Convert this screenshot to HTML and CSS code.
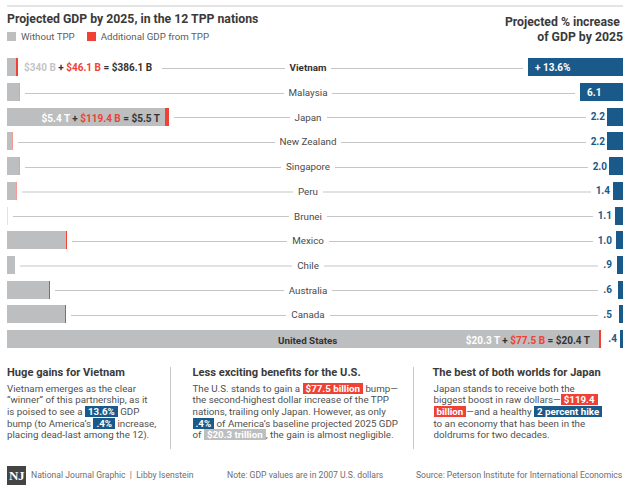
FILE: index.html
```html
<!DOCTYPE html>
<html lang="en">
<head>
<meta charset="utf-8">
<title>Projected GDP by 2025</title>
<link rel="stylesheet" href="styles.css">
</head>
<body>
<main class="page">
  <header class="head">
    <div>
      <h1 class="title">Projected GDP by 2025, in the 12 TPP nations</h1>
      <div class="legend">
        <span class="key"><i class="swatch gray"></i>Without TPP</span>
        <span class="key"><i class="swatch red"></i>Additional GDP from TPP</span>
      </div>
    </div>
    <h2 class="title right-title">Projected % increase&nbsp;<br>of GDP by 2025</h2>
  </header>

  <section class="chart">
    <div class="row strong">
      <div class="left"><i class="g" style="width:9px"></i><i class="r" style="width:2px"></i><span class="sum"><span class="light">$340 B</span> + <span class="redt">$46.1 B</span> = $386.1 B</span><i class="line"></i></div>
      <div class="mid"><i class="line"></i><span class="name">Vietnam</span><i class="line"></i></div>
      <div class="right"><i class="line"></i><b class="bar wide" style="width:95px">+ 13.6%</b></div>
    </div>
    <div class="row">
      <div class="left"><i class="g" style="width:12px"></i><i class="r thin" style="width:1px"></i><i class="line"></i></div>
      <div class="mid"><i class="line"></i><span class="name">Malaysia</span><i class="line"></i></div>
      <div class="right"><i class="line"></i><b class="bar wide" style="width:43px">6.1</b></div>
    </div>
    <div class="row">
      <div class="left"><i class="g in" style="width:158px"><span class="sum"><span class="white">$5.4 T</span> + <span class="redt">$119.4 B</span> = $5.5 T</span></i><i class="r" style="width:4px"></i><i class="line"></i></div>
      <div class="mid"><i class="line"></i><span class="name">Japan</span><i class="line"></i></div>
      <div class="right"><i class="line"></i><b class="val">2.2</b><i class="bar" style="width:16px"></i></div>
    </div>
    <div class="row">
      <div class="left"><i class="g" style="width:5px"></i><i class="r thin" style="width:1px"></i><i class="line"></i></div>
      <div class="mid"><i class="line"></i><span class="name">New Zealand</span><i class="line"></i></div>
      <div class="right"><i class="line"></i><b class="val">2.2</b><i class="bar" style="width:16px"></i></div>
    </div>
    <div class="row">
      <div class="left"><i class="g" style="width:12px"></i><i class="r thin" style="width:1px"></i><i class="line"></i></div>
      <div class="mid"><i class="line"></i><span class="name">Singapore</span><i class="line"></i></div>
      <div class="right"><i class="line"></i><b class="val">2.0</b><i class="bar" style="width:14px"></i></div>
    </div>
    <div class="row soft">
      <div class="left"><i class="g" style="width:9px"></i><i class="r thin" style="width:1px"></i><i class="line"></i></div>
      <div class="mid"><i class="line"></i><span class="name">Peru</span><i class="line"></i></div>
      <div class="right"><i class="line"></i><b class="val" style="margin-right:3px">1.4</b><i class="bar" style="width:10px"></i></div>
    </div>
    <div class="row">
      <div class="left"><i class="g pale" style="width:1px"></i><i class="line"></i></div>
      <div class="mid"><i class="line"></i><span class="name">Brunei</span><i class="line"></i></div>
      <div class="right"><i class="line"></i><b class="val" style="margin-right:3px">1.1</b><i class="bar" style="width:8px"></i></div>
    </div>
    <div class="row">
      <div class="left"><i class="g" style="width:59px"></i><i class="r" style="width:1px"></i><i class="line"></i></div>
      <div class="mid"><i class="line"></i><span class="name">Mexico</span><i class="line"></i></div>
      <div class="right"><i class="line"></i><b class="val" style="margin-right:4px">1.0</b><i class="bar" style="width:7px"></i></div>
    </div>
    <div class="row soft">
      <div class="left"><i class="g" style="width:8px"></i><i class="line"></i></div>
      <div class="mid"><i class="line"></i><span class="name">Chile</span><i class="line"></i></div>
      <div class="right"><i class="line"></i><b class="val" style="margin-right:5px">.9</b><i class="bar" style="width:6px"></i></div>
    </div>
    <div class="row">
      <div class="left"><i class="g" style="width:42px"></i><i class="r" style="width:1px"></i><i class="line"></i></div>
      <div class="mid"><i class="line"></i><span class="name">Australia</span><i class="line"></i></div>
      <div class="right"><i class="line"></i><b class="val" style="margin-right:6px">.6</b><i class="bar" style="width:5px"></i></div>
    </div>
    <div class="row">
      <div class="left"><i class="g" style="width:58px"></i><i class="r" style="width:1px"></i><i class="line"></i></div>
      <div class="mid"><i class="line"></i><span class="name">Canada</span><i class="line"></i></div>
      <div class="right"><i class="line"></i><b class="val" style="margin-right:7px">.5</b><i class="bar" style="width:4px"></i></div>
    </div>
    <div class="row usa">
      <div class="usa-bar">
        <span class="name">United States</span>
        <span class="sum"><span class="white">$20.3 T</span> + <span class="redt">$77.5 B</span> = $20.4 T</span>
      </div>
      <i class="r" style="width:2px"></i>
      <b class="val">.4</b><i class="bar" style="width:3px"></i>
    </div>
  </section>

  <section class="notes">
    <article class="note first">
      <h3>Huge gains for Vietnam</h3>
      <p>Vietnam emerges as the clear<br>“winner” of this partnership, as it<br>is poised to see a <mark class="hb">13.6%</mark> GDP<br>bump (to America’s <mark class="hb">.4%</mark> increase,<br>placing dead-last among the 12).</p>
    </article>
    <article class="note second">
      <h3>Less exciting benefits for the U.S.</h3>
      <p>The U.S. stands to gain a <mark class="hr">$77.5 billion</mark> bump—<br>the second-highest dollar increase of the TPP<br>nations, trailing only Japan. However, as only<br><mark class="hb">.4%</mark> of America’s baseline projected 2025 GDP<br>of <mark class="hg">$20.3 trillion</mark>, the gain is almost negligible.</p>
    </article>
    <article class="note third">
      <h3>The best of both worlds for Japan</h3>
      <p>Japan stands to receive both the<br>biggest boost in raw dollars—<mark class="hr">$119.4</mark><br><mark class="hr">billion</mark>—and a healthy <mark class="hb">2 percent hike</mark><br>to an economy that has been in the<br>doldrums for two decades.</p>
    </article>
  </section>

  <footer class="foot">
    <div class="credit"><span class="logo">NJ</span>National Journal Graphic &nbsp;|&nbsp; Libby Isenstein</div>
    <div class="fnote">Note: GDP values are in 2007 U.S. dollars</div>
    <div class="source">Source: Peterson Institute for International Economics</div>
  </footer>
</main>
</body>
</html>
```

FILE: styles.css
```css
* { box-sizing: border-box; }
html, body { margin: 0; padding: 0; background: #fff; }
body { font-family: Roboto, "Liberation Sans", sans-serif; color: #555; width: 630px; height: 488px; overflow: hidden; }
i { font-style: normal; display: block; }
.page { padding: 5px 7px 0; }

.head { display: flex; justify-content: space-between; border-top: 2px solid #e4e4e4; height: 53.4px; padding-top: 5px; }
.title { margin: 0; font-size: 12.25px; font-weight: 700; line-height: 15px; color: #3a3a3a; }
.right-title { text-align: right; padding-top: 3px; }
.legend { display: flex; gap: 12px; margin-top: 3px; font-size: 9.7px; line-height: 13px; color: #5c5c5c; }
.key { display: flex; align-items: center; gap: 5px; }
.swatch { width: 9px; height: 9px; }
.swatch.gray { background: #bdbebf; }
.swatch.red { background: #ef4136; }

.chart { display: flex; flex-direction: column; gap: 6.7px; }
.row { display: grid; grid-template-columns: 243px 116px 1fr; height: 18px; align-items: center; font-size: 9.8px; line-height: 18px; }
.left, .mid, .right { display: flex; align-items: center; height: 18px; min-width: 0; }
.g { height: 18px; background: #bdbebf; flex: none; }
.g.pale { background: #e2e2e2; }
.r { height: 18px; background: #ef4136; flex: none; }
.r.thin { background: #f49a94; }
.line { flex: 1; min-width: 0; height: 1px; margin-top: 2px; background: #c6c6c6; }
.soft .line { height: 2px; background: #e2e2e2; }
.left .line { margin-left: 5px; }
.right .line { margin-right: 5px; }
.name { flex: none; margin: 0 5px; padding-top: 2px; color: #4a4a4a; }
.strong .name, .usa .name { font-weight: 700; color: #333; }
.sum { flex: none; margin: 0 5px 0 6px; padding-top: 2px; font-weight: 700; font-size: 10px; color: #333; white-space: nowrap; }
.light { color: #c4c5c6; }
.white { color: #fff; }
.redt { color: #ef4136; }
.g.in { display: flex; justify-content: flex-end; }
.g.in .sum { margin: 0 5px 0 0; }
.bar { height: 18px; background: #1a5a8a; flex: none; }
.bar.wide { color: #fff; font-size: 10px; line-height: 20px; padding-left: 7px; }
.val { flex: none; margin-right: 2px; padding-top: 1px; color: #1a5a8a; font-size: 10px; }

.usa { display: flex; }
.usa-bar { flex: none; width: 592px; height: 18px; background: #bdbebf; display: flex; justify-content: space-between; padding-left: 271px; }
.usa-bar .name { margin: 0; }
.usa-bar .sum { margin: 0 9px 0 0; }
.usa .val { margin-left: auto; margin-right: 3px; }

.notes { display: flex; margin-top: 18.6px; height: 82px; }
.note { height: 82px; }
.note h3 { margin: 0; font-size: 11.1px; line-height: 12px; font-weight: 700; color: #3a3a3a; }
.note p { margin: 4px 0 0; font-size: 9.75px; line-height: 11.7px; color: #4f4f4f; white-space: nowrap; }
.first { width: 163.5px; border-right: 1px solid #c6c6c6; }
.second { width: 243px; padding-left: 22px; border-right: 1px solid #c6c6c6; }
.third { padding-left: 19px; }
.third p { padding-left: 1px; }
mark { color: #fff; font-weight: 700; padding: 0 3px; }
.hb { background: #1a5a8a; }
.hr { background: #ef4136; }
.hg { background: #bdbebf; }

.foot { display: flex; align-items: center; margin-top: 17px; font-size: 8.6px; color: #6e6e6e; height: 19px; }
.credit { display: flex; align-items: center; width: 220px; }
.fnote { width: 189px; }
.source { white-space: nowrap; }
.logo { position: relative; width: 19px; height: 19px; margin-right: 5px; background: #444; color: #fff; font-family: "Liberation Serif", serif; font-weight: 700; font-size: 13px; line-height: 19px; text-align: center; letter-spacing: -0.5px; }
.logo::after { content: ""; position: absolute; left: 0; right: 0; top: 22px; height: 1px; background: #dcdcdc; }
```
